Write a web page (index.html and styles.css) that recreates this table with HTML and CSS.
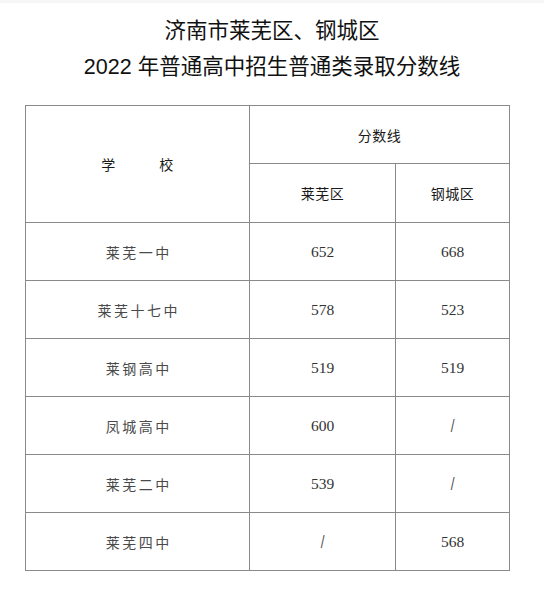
FILE: index.html
```html
<!DOCTYPE html>
<html lang="zh">
<head>
<meta charset="utf-8">
<link rel="stylesheet" href="styles.css">
</head>
<body>
<div class="strip"></div>
<h1 class="title">
  <span class="line">济南市莱芜区、钢城区</span>
  <span class="line">2022 年普通高中招生普通类录取分数线</span>
</h1>
<table class="scores">
  <colgroup>
    <col class="c1"><col class="c2"><col class="c3">
  </colgroup>
  <thead>
    <tr class="h1row">
      <th rowspan="2" class="school-h">学　　　校</th>
      <th colspan="2">分数线</th>
    </tr>
    <tr class="h2row">
      <th>莱芜区</th>
      <th>钢城区</th>
    </tr>
  </thead>
  <tbody>
    <tr><td class="name">莱芜一中</td><td class="num">652</td><td class="num">668</td></tr>
    <tr><td class="name">莱芜十七中</td><td class="num">578</td><td class="num">523</td></tr>
    <tr><td class="name">莱钢高中</td><td class="num">519</td><td class="num">519</td></tr>
    <tr><td class="name">凤城高中</td><td class="num">600</td><td class="num"><span class="slash">/</span></td></tr>
    <tr><td class="name">莱芜二中</td><td class="num">539</td><td class="num"><span class="slash">/</span></td></tr>
    <tr><td class="name">莱芜四中</td><td class="num"><span class="slash">/</span></td><td class="num">568</td></tr>
  </tbody>
</table>
</body>
</html>
```
FILE: styles.css
```css
html, body {
  margin: 0;
  padding: 0;
  background: #ffffff;
}
.strip {
  height: 3px;
  background: #f6f6f6;
}
.title {
  margin: 10px 0 0 0;
  padding: 0;
  font-family: "Liberation Sans", "Noto Sans CJK SC", sans-serif;
  font-weight: normal;
  font-size: 21.5px;
  line-height: 36px;
  color: #111;
  text-align: center;
  display: flex;
  flex-direction: column;
  align-items: center;
}
.title .line {
  display: block;
}
.scores {
  margin: 20px 0 0 25px;
  border-collapse: collapse;
  table-layout: fixed;
  width: 484px;
}
.c1 { width: 224px; }
.c2 { width: 146px; }
.c3 { width: 114px; }
.scores th, .scores td {
  border: 1px solid #8a8a8a;
  padding: 0;
  text-align: center;
  vertical-align: middle;
}
.scores th {
  font-family: "Noto Sans CJK SC", sans-serif;
  font-weight: normal;
  font-size: 14px;
  color: #1a1a1a;
  letter-spacing: 0.5px;
}
.h1row { height: 58px; }
.h2row { height: 59px; }
.scores tbody tr { height: 58px; }
.school-h {
  letter-spacing: 0;
}
.name {
  font-family: "Noto Sans CJK SC", sans-serif;
  font-size: 14px;
  color: #4a4a4a;
  letter-spacing: 2.5px;
  padding-left: 2.5px !important;
}
.num {
  font-family: "Liberation Serif", serif;
  font-size: 15.5px;
  color: #333;
}
.slash {
  font-family: "DejaVu Sans", sans-serif;
  font-size: 15px;
  color: #444;
  display: inline-block;
  transform: scaleX(0.75);
}
```
